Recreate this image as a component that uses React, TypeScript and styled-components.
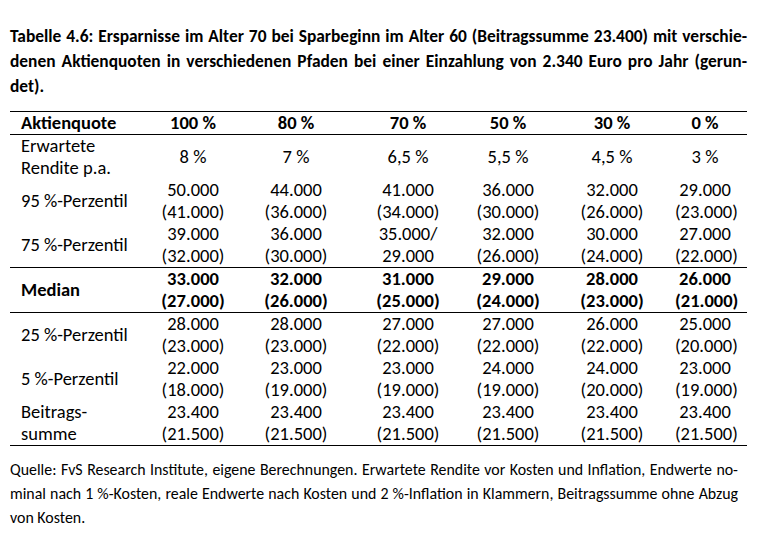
import React from 'react';
import styled, { createGlobalStyle } from 'styled-components';

const GlobalStyle = createGlobalStyle`
  html, body {
    margin: 0;
    padding: 0;
    background: #ffffff;
  }
  body {
    font-family: Carlito, Calibri, Lato, "Liberation Sans", sans-serif;
    color: #000000;
  }
`;

const Page = styled.div`
  width: 758px;
  height: 547px;
  box-sizing: border-box;
  padding: 24px 11px 0 10px;
  display: flex;
  flex-direction: column;
`;

const Title = styled.div`
  font-size: 17.4px;
  font-weight: 700;
  line-height: 25px;
  width: 737px;
`;

const Line = styled.span<{ $last?: boolean }>`
  display: block;
  white-space: nowrap;
  text-align: justify;
  text-align-last: ${({ $last }) => ($last ? 'left' : 'justify')};
`;

const Table = styled.table`
  margin-top: 12px;
  width: 737px;
  border-collapse: collapse;
  table-layout: fixed;
  font-size: 18.5px;
  line-height: 22px;
`;

const Col = styled.col<{ $w: number }>`
  width: ${({ $w }) => $w}px;
`;

const Row = styled.tr<{ $rule?: boolean; $bold?: boolean }>`
  border-bottom: ${({ $rule }) => ($rule ? '1.5px solid #000' : 'none')};
  font-weight: ${({ $bold }) => ($bold ? 700 : 400)};
`;

const HeadRow = styled.tr`
  border-top: 1.5px solid #000;
  border-bottom: 1.5px solid #000;
  font-weight: 700;
`;

const Label = styled.td`
  padding: 0 0 0 11px;
  text-align: left;
  vertical-align: middle;
  white-space: nowrap;
`;

const Cell = styled.td`
  padding: 0;
  text-align: center;
  vertical-align: middle;
  white-space: nowrap;

  &:last-child {
    padding-right: 12px;
  }
`;

const HeadCell = styled(Cell)`
  height: 22px;
`;

const Caption = styled.div`
  margin-top: 12px;
  width: 728px;
  font-size: 15.9px;
  line-height: 24px;
`;

const widths = [133, 100, 106, 118, 82, 126, 72];
const quotes = ['100 %', '80 %', '70 %', '50 %', '30 %', '0 %'];

type RowData = {
  label: React.ReactNode;
  values: [string, string?][];
  bold?: boolean;
  rule?: boolean;
};

const rows: RowData[] = [
  {
    label: (
      <>
        Erwartete
        <br />
        Rendite p.a.
      </>
    ),
    values: [['8 %'], ['7 %'], ['6,5 %'], ['5,5 %'], ['4,5 %'], ['3 %']],
  },
  {
    label: '95 %-Perzentil',
    values: [
      ['50.000', '(41.000)'],
      ['44.000', '(36.000)'],
      ['41.000', '(34.000)'],
      ['36.000', '(30.000)'],
      ['32.000', '(26.000)'],
      ['29.000', '(23.000)'],
    ],
  },
  {
    label: '75 %-Perzentil',
    rule: true,
    values: [
      ['39.000', '(32.000)'],
      ['36.000', '(30.000)'],
      ['35.000/', '29.000'],
      ['32.000', '(26.000)'],
      ['30.000', '(24.000)'],
      ['27.000', '(22.000)'],
    ],
  },
  {
    label: 'Median',
    bold: true,
    rule: true,
    values: [
      ['33.000', '(27.000)'],
      ['32.000', '(26.000)'],
      ['31.000', '(25.000)'],
      ['29.000', '(24.000)'],
      ['28.000', '(23.000)'],
      ['26.000', '(21.000)'],
    ],
  },
  {
    label: '25 %-Perzentil',
    values: [
      ['28.000', '(23.000)'],
      ['28.000', '(23.000)'],
      ['27.000', '(22.000)'],
      ['27.000', '(22.000)'],
      ['26.000', '(22.000)'],
      ['25.000', '(20.000)'],
    ],
  },
  {
    label: '5 %-Perzentil',
    values: [
      ['22.000', '(18.000)'],
      ['23.000', '(19.000)'],
      ['23.000', '(19.000)'],
      ['24.000', '(19.000)'],
      ['24.000', '(20.000)'],
      ['23.000', '(19.000)'],
    ],
  },
  {
    label: (
      <>
        Beitrags-
        <br />
        summe
      </>
    ),
    rule: true,
    values: [
      ['23.400', '(21.500)'],
      ['23.400', '(21.500)'],
      ['23.400', '(21.500)'],
      ['23.400', '(21.500)'],
      ['23.400', '(21.500)'],
      ['23.400', '(21.500)'],
    ],
  },
];

export default function App() {
  return (
    <>
      <GlobalStyle />
      <Page>
        <Title>
          <Line>
            Tabelle 4.6: Ersparnisse im Alter 70 bei Sparbeginn im Alter 60 (Beitragssumme 23.400) mit verschie-
          </Line>
          <Line>
            denen Aktienquoten in verschiedenen Pfaden bei einer Einzahlung von 2.340 Euro pro Jahr (gerun-
          </Line>
          <Line $last>det).</Line>
        </Title>

        <Table>
          <colgroup>
            {widths.map((w, i) => (
              <Col key={i} $w={w} />
            ))}
          </colgroup>
          <thead>
            <HeadRow>
              <Label as="th">Aktienquote</Label>
              {quotes.map((q) => (
                <HeadCell as="th" key={q}>
                  {q}
                </HeadCell>
              ))}
            </HeadRow>
          </thead>
          <tbody>
            {rows.map((r, i) => (
              <Row key={i} $bold={r.bold} $rule={r.rule}>
                <Label>{r.label}</Label>
                {r.values.map(([a, b], j) => (
                  <Cell key={j}>
                    {a}
                    {b && (
                      <>
                        <br />
                        {b}
                      </>
                    )}
                  </Cell>
                ))}
              </Row>
            ))}
          </tbody>
        </Table>

        <Caption>
          <Line>
            Quelle: FvS Research Institute, eigene Berechnungen. Erwartete Rendite vor Kosten und Inflation, Endwerte no-
          </Line>
          <Line>
            minal nach 1 %-Kosten, reale Endwerte nach Kosten und 2 %-Inflation in Klammern, Beitragssumme ohne Abzug
          </Line>
          <Line $last>von Kosten.</Line>
        </Caption>
      </Page>
    </>
  );
}
